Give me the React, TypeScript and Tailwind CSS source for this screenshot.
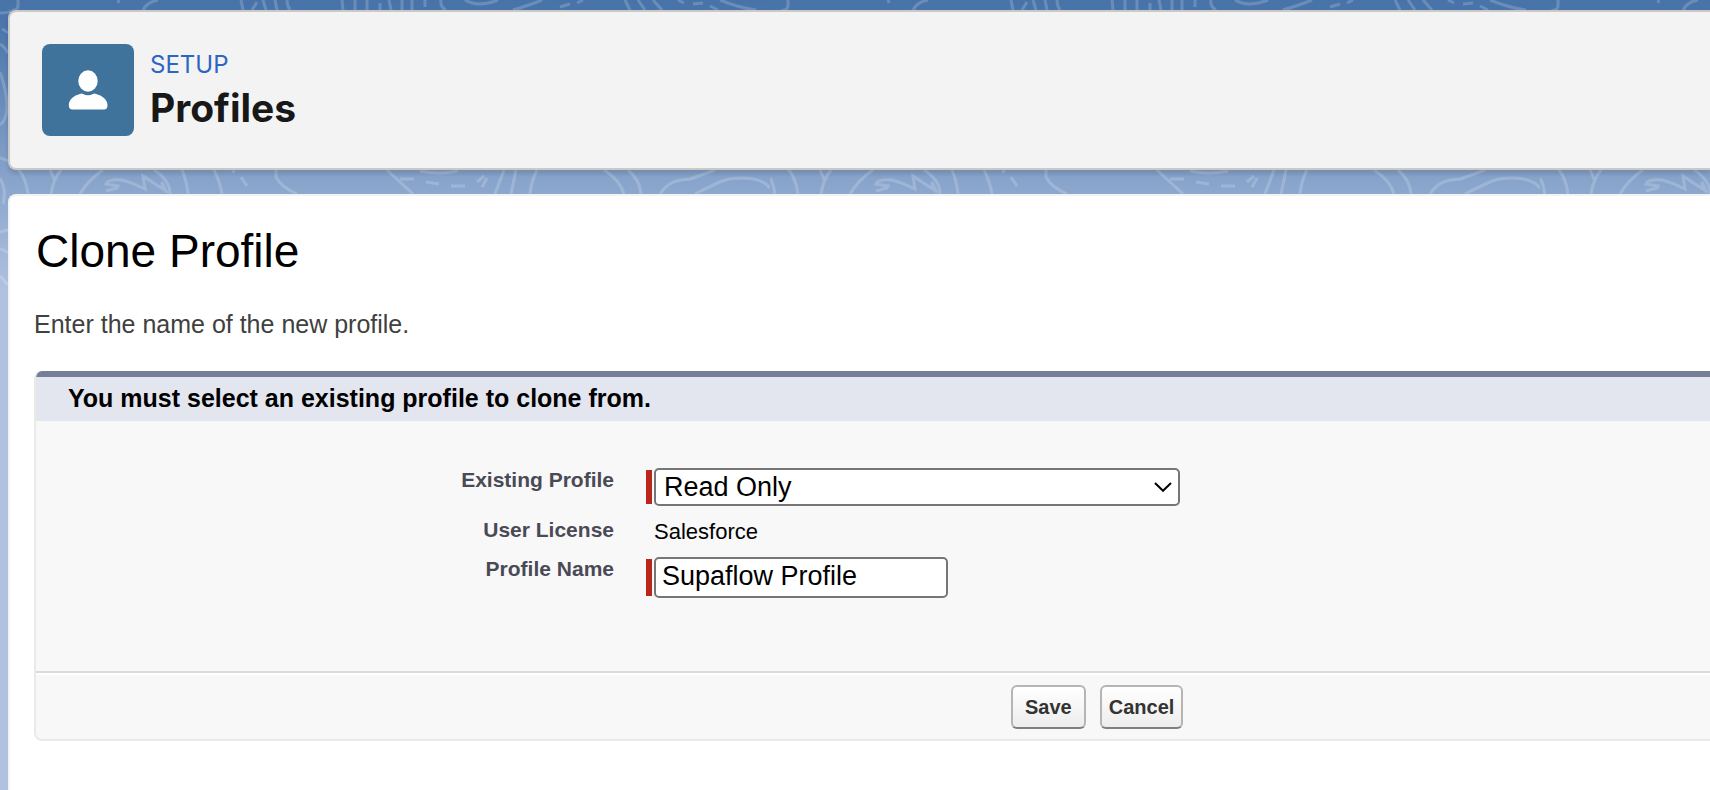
import type { ReactNode } from "react";

const PROFILES = [
  "Read Only",
  "Standard User",
  "Solution Manager",
  "Marketing User",
  "System Administrator",
];

function Backdrop() {
  return (
    <svg
      aria-hidden="true"
      className="absolute inset-0 -z-10 h-full w-full"
      fill="none"
    >
      <defs>
        <pattern
          id="topography"
          width="770"
          height="1200"
          patternUnits="userSpaceOnUse"
        >
          <g stroke="#fff" strokeOpacity="0.18" strokeWidth="3">
            {/* top strip */}
            <path d="M18 0C18 6 19 9 14 10C10 12 5 13 0 13M118 0l1 3M143 10Q147 2 158 0M241 0l2 10M257 2l-5 8M263 0l3 10M275 0l2 10M287 0Q287 6 290 10M342 0l1 10M355 0v10M367 0v10M380 3v7M389 0l2 10M402 0v10M412 0v10M425 0v7" />
            <path d="M441 0Q440 7 446 10M465 0Q478 8 498 0M513 10Q530 5 542 0M560 7l10-3M577 3l6-3M625 0l5 10M638 0l7 10M653 0l9 10M678 0l6 3M693 4l10-1M710 6l8 4M720 0Q740 8 756 10" />
            {/* left edge */}
            <path d="M2 29l7 4M0 44Q5 47 8 53M0 72Q7 92 7 106T0 125M0 158Q24 164 28 194M0 178Q7 190 3 204M0 232l8-2M0 249q5 1 8 4M0 276l8 9" />
            {/* band between the header and the content */}
            <path d="M50 170l5 11M61 170Q53 180 51 194M103 170Q88 180 80 194M106 191L117 188L118 186L106 184Q108 179 122 180Q134 183 145 189L143 176L155 184L163 189L162 182L167 193M154 170Q170 180 170 194M182 170Q187 182 188 194M214 170Q220 182 222 194M232 171l3 1M241 177l6 9M276 170V177Q281 187 297 194" />
            <path d="M387 170L413 194M400 179h14M426 182l13 2M451 186h14M484 176l-7 6M487 178l-5 9M420 171Q438 175 458 171M504 170l-9 24M516 170l-5 24M537 170Q531 182 530 194" />
            <path d="M604 170Q620 180 624 194M628 170Q640 180 641 194M660 194C668 182 676 180 690 179Q702 175 715 170M695 194C720 182 724 178 742 178Q762 178 770 188" />
          </g>
        </pattern>
      </defs>
      <rect width="100%" height="100%" fill="url(#topography)" />
    </svg>
  );
}

function UserIcon() {
  return (
    <svg
      aria-hidden="true"
      viewBox="0 0 92 92"
      className="size-[92px] shrink-0 rounded-lg bg-[#3f739b]"
      fill="#fff"
    >
      <ellipse cx="46" cy="37" rx="9.7" ry="10.7" />
      <path d="M38 50C39 49 40 49.500 41 50Q46 52.500 51 50C52 49.500 53 49 54 50C60 51.500 65.500 55.500 65.500 61Q65.500 65.500 62 65.500H30.500Q26.800 65.500 26.800 61C26.800 55.500 32 51.500 38 50Z" />
    </svg>
  );
}

function Row({
  label,
  htmlFor,
  children,
}: {
  label: string;
  htmlFor?: string;
  children: ReactNode;
}) {
  const style = "text-right text-[21px] leading-6 font-bold text-[#4a4a56]";
  return (
    <div className="grid grid-cols-[minmax(0,578px)_1fr] items-start gap-x-8">
      {htmlFor ? (
        <label htmlFor={htmlFor} className={style}>
          {label}
        </label>
      ) : (
        <span className={`${style} pt-0.5`}>{label}</span>
      )}
      {children}
    </div>
  );
}

function Required({ children }: { children: ReactNode }) {
  return (
    <div className="flex gap-0.5">
      <span className="my-0.5 w-1.5 shrink-0 bg-[#b8261c]" />
      {children}
    </div>
  );
}

function Button({ children }: { children: ReactNode }) {
  return (
    <button
      type="button"
      className="h-11 rounded-md border-2 border-[#b5b5b5] border-b-[#7f7f7f] bg-linear-to-b from-white to-[#ededed] px-[7px] text-[20px] leading-6 font-bold text-[#333] first:px-3"
    >
      {children}
    </button>
  );
}

export default function App() {
  return (
    <div className="relative isolate flex min-h-screen flex-col overflow-hidden bg-[#b1c1de] bg-[linear-gradient(#4873a8_0px,#4c77ac_30px,#8aa5cc_185px,#98b0d4_225px,#b1c1de_290px)] pt-2.5 pl-2 font-['Liberation_Sans',Arial,sans-serif] text-black">
      <Backdrop />
      <header className="flex items-center gap-4 rounded-l-lg border-2 border-r-0 border-[#c9c9c9] bg-[#f3f3f3] p-8 font-['Inter',sans-serif] shadow-[0_4px_4px_rgba(0,0,0,0.12)]">
        <UserIcon />
        <div className="pt-1">
          <p className="text-2xl leading-8 text-[#2b66c2]">SETUP</p>
          <h1 className="text-[39px] leading-[54px] font-bold text-[#181818]">
            Profiles
          </h1>
        </div>
      </header>

      <main className="mt-6 grow rounded-tl-lg border-t-2 border-l-2 border-[#f3f3f6] bg-white pb-12 pl-6">
        <h2 className="px-0.5 pt-[31px] text-[46px] leading-[48px]">
          Clone Profile
        </h2>
        <p className="mt-[33px] text-[25px] leading-8 text-[#404040]">
          Enter the name of the new profile.
        </p>

        <form className="mt-[31px] overflow-hidden rounded-l-lg border-b-2 border-l-2 border-[#eaeaea] bg-[#f8f8f8]">
          <h3 className="border-t-6 border-[#747e96] bg-[#e3e5ef] pb-0.5 pl-8 text-[25px] leading-[42px] font-bold">
            You must select an existing profile to clone from.
          </h3>

          <div className="flex flex-col gap-2.5 pt-[47px] pb-[73px]">
            <Row label="Existing Profile" htmlFor="existing">
              <Required>
                <div className="relative w-full max-w-[526px]">
                  <select
                    id="existing"
                    defaultValue="Read Only"
                    className="block h-[38px] w-full appearance-none rounded-[5px] border-2 border-[#767676] bg-white pr-10 pl-2 text-[27px] leading-8"
                  >
                    {PROFILES.map((name) => (
                      <option key={name}>{name}</option>
                    ))}
                  </select>
                  <svg
                    aria-hidden="true"
                    viewBox="0 0 18 10"
                    className="pointer-events-none absolute top-3.5 right-2 h-2.5 w-[18px]"
                    fill="none"
                    stroke="#000"
                    strokeWidth="2"
                  >
                    <path d="M1 1L9 8.800L17 1" />
                  </svg>
                </div>
              </Required>
            </Row>
            <Row label="User License">
              <span className="pl-2 text-[22px] leading-[31px]">
                Salesforce
              </span>
            </Row>
            <Row label="Profile Name" htmlFor="name">
              <Required>
                <input
                  id="name"
                  type="text"
                  defaultValue="Supaflow Profile"
                  className="h-[41px] w-full max-w-[294px] rounded-[5px] border-2 border-[#767676] bg-white px-1.5 pb-0.5 text-[27px] leading-8"
                />
              </Required>
            </Row>
          </div>

          <div className="border-t-2 border-[#dbdbdb]">
            <div className="flex gap-3.5 border-t-2 border-white py-2.5 pl-[975px]">
              <Button>Save</Button>
              <Button>Cancel</Button>
            </div>
          </div>
        </form>
      </main>
    </div>
  );
}
